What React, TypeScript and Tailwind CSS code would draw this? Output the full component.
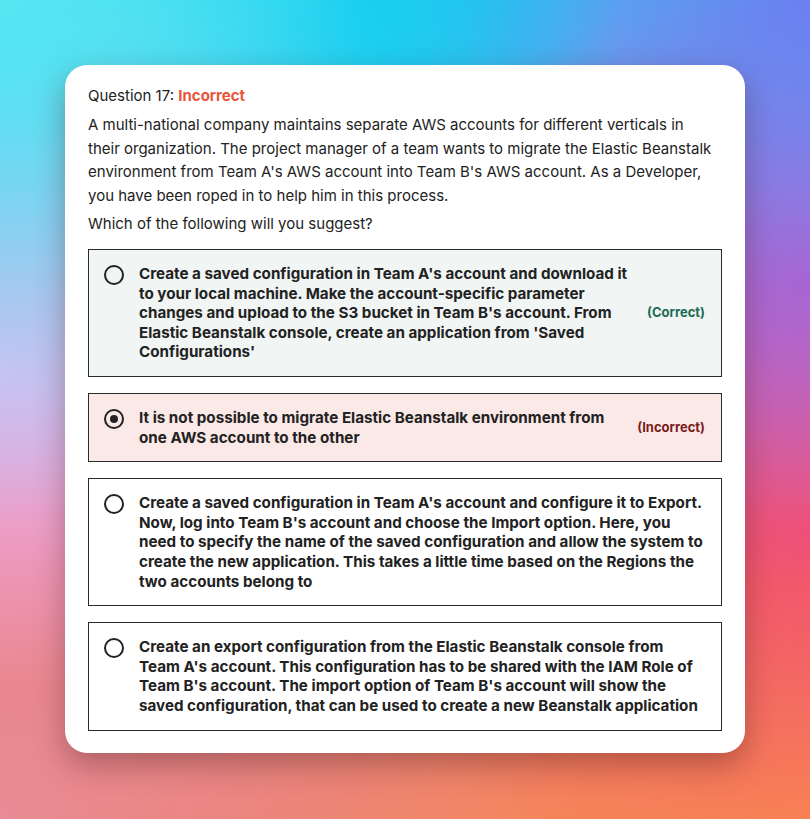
import React from "react";

type Option = {
  text: string;
  status?: "correct" | "incorrect";
  selected?: boolean;
};

const options: Option[] = [
  {
    text: "Create a saved configuration in Team A's account and download it to your local machine. Make the account-specific parameter changes and upload to the S3 bucket in Team B's account. From Elastic Beanstalk console, create an application from 'Saved Configurations'",
    status: "correct",
  },
  {
    text: "It is not possible to migrate Elastic Beanstalk environment from one AWS account to the other",
    status: "incorrect",
    selected: true,
  },
  {
    text: "Create a saved configuration in Team A's account and configure it to Export. Now, log into Team B's account and choose the Import option. Here, you need to specify the name of the saved configuration and allow the system to create the new application. This takes a little time based on the Regions the two accounts belong to",
  },
  {
    text: "Create an export configuration from the Elastic Beanstalk console from Team A's account. This configuration has to be shared with the IAM Role of Team B's account. The import option of Team B's account will show the saved configuration, that can be used to create a new Beanstalk application",
  },
];

function Radio({ selected }: { selected?: boolean }) {
  return (
    <span className="mt-[1px] w-5 h-5 shrink-0 rounded-full border-2 border-[#222] flex items-center justify-center">
      {selected && <span className="w-2 h-2 rounded-full bg-[#222]" />}
    </span>
  );
}

function OptionRow({ option }: { option: Option }) {
  const bg =
    option.status === "correct"
      ? "bg-[#f1f5f4]"
      : option.status === "incorrect"
      ? "bg-[#fbe9e7]"
      : "bg-white";
  return (
    <div className={`${bg} border border-[#2a2a2a] pl-[15px] pr-4 py-[14px] flex items-center gap-4`}>
      <div className="flex items-start gap-[15px] flex-1 self-start">
        <Radio selected={option.selected} />
        <p className={`text-[15.2px] leading-[19.6px] font-bold text-[#222] ${option.status ? "max-w-[490px]" : ""}`}>
          {option.text}
        </p>
      </div>
      {option.status === "correct" && (
        <span className="ml-auto text-[13px] font-bold text-[#1d6b52]">(Correct)</span>
      )}
      {option.status === "incorrect" && (
        <span className="ml-auto text-[13px] font-bold text-[#7a1d1d]">(Incorrect)</span>
      )}
    </div>
  );
}

export default function App() {
  return (
    <div
      className="min-h-screen w-full p-[65px] font-['Inter',sans-serif] bg-[radial-gradient(ellipse_at_0%_0%,#55e6f2_0%,transparent_45%),radial-gradient(ellipse_at_45%_0%,#00c6ef_0%,transparent_40%),radial-gradient(ellipse_at_100%_0%,#6c7ff0_0%,transparent_45%),radial-gradient(ellipse_at_0%_45%,#f0b6f2_0%,transparent_50%),radial-gradient(ellipse_at_100%_35%,#d84fb8_0%,transparent_40%),radial-gradient(ellipse_at_100%_65%,#f2506a_0%,transparent_45%),radial-gradient(ellipse_at_0%_100%,#e98a95_0%,transparent_50%),radial-gradient(ellipse_at_100%_100%,#f98a50_0%,transparent_50%),linear-gradient(180deg,#3cd6f0_0%,#b8a8f0_35%,#ec7a92_70%,#ee8060_100%)]"
    >
      <div className="bg-white rounded-[22px] shadow-[0_12px_30px_rgba(60,20,20,0.35)] pl-[23px] pr-[23px] pt-[19px] pb-[22px]">
        <h2 className="text-[15px] leading-6 text-[#222]">
          Question 17: <span className="font-bold text-[#e8553b]">Incorrect</span>
        </h2>
        <p className="mt-[5px] mr-[4px] text-[15px] leading-[23.5px] text-[#222]">
          A multi-national company maintains separate AWS accounts for different verticals in their organization. The project manager of a team wants to migrate the Elastic Beanstalk environment from Team A's AWS account into Team B's AWS account. As a Developer, you have been roped in to help him in this process.
        </p>
        <p className="mt-[5px] text-[15px] leading-6 text-[#222]">Which of the following will you suggest?</p>
        <div className="mt-[13px] flex flex-col gap-[16px]">
          {options.map((o, i) => (
            <OptionRow key={i} option={o} />
          ))}
        </div>
      </div>
    </div>
  );
}
